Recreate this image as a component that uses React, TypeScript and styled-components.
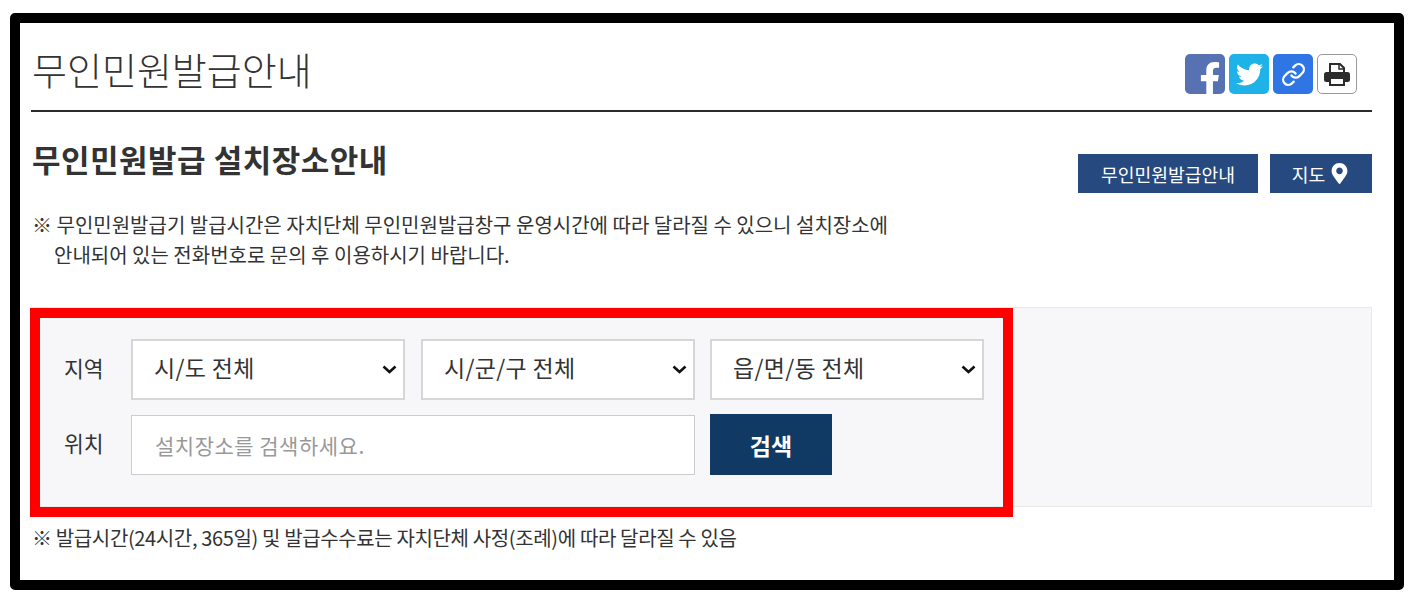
import React from "react";
import styled, { createGlobalStyle } from "styled-components";
import { FaTwitter, FaFacebookF, FaMapMarkerAlt } from "react-icons/fa";
import { Link as LinkIcon } from "lucide-react";

const Global = createGlobalStyle`
  html, body { margin: 0; padding: 0; background: #fff; }
  body { font-family: "Noto Sans CJK KR", "Noto Sans", sans-serif; color: #333; width: 1415px; height: 602px; overflow: hidden; }
  * { box-sizing: border-box; }
`;

const Frame = styled.div`
  width: 1394px; height: 577px; margin: 13px 0 0 10px;
  border: 10px solid #000; border-radius: 5px; background: #fff;
  padding: 0 22px 0 11px;
`;
const TitleBar = styled.header`
  height: 89px; display: flex; justify-content: space-between; align-items: flex-start;
  border-bottom: 2px solid #2b2b2b;
`;
const Title = styled.h1`
  margin: 21px 0 0 1px; font-size: 38px; line-height: 50px; font-weight: 300; color: #333; white-space: nowrap;
`;
const Share = styled.div`
  display: flex; gap: 4px; margin: 31px 15px 0 0;
`;
const ShareIcon = styled.a<{ $bg: string; $border?: string; $fg?: string }>`
  width: 40px; height: 40px; border-radius: 5px; display: flex; align-items: center; justify-content: center;
  overflow: hidden;
  background: ${p => p.$bg}; color: ${p => p.$fg ?? "#fff"};
  border: ${p => p.$border ? `1px solid ${p.$border}` : "none"};
`;
const HeadRow = styled.div`
  display: flex; justify-content: space-between; align-items: flex-start; height: 195px;
`;
const HeadText = styled.div`
  padding: 26px 0 0 1px;
`;
const SubTitle = styled.h2`
  margin: 0; font-size: 31px; line-height: 42px; font-weight: 700; color: #333; white-space: nowrap; letter-spacing: 0.5px;
`;
const Note = styled.p<{ $indent?: boolean }>`
  margin: 0; font-size: 20px; line-height: 30px; color: #333; white-space: nowrap;
  padding-left: ${p => (p.$indent ? "22px" : "0")};
`;
const Notes = styled.div`
  margin-top: 30px;
`;
const Actions = styled.div`
  display: flex; gap: 12px; padding-top: 42px;
`;
const ActionBtn = styled.a<{ $w: number }>`
  width: ${p => p.$w}px; height: 39px; background: #264a80; color: #fff; font-size: 18.2px;
  display: flex; align-items: center; justify-content: center; gap: 4px;
`;
const Panel = styled.section`
  position: relative; height: 200px; background: #f7f7f9; border: 1px solid #e9e9e9;
  padding: 31px 0 0 32px; display: flex; flex-direction: column; gap: 14px;
`;
const RedBox = styled.div`
  position: absolute; left: -2px; top: 0; width: 983px; height: 209px; border: 10px solid #f00; pointer-events: none;
`;
const Row = styled.div`
  display: flex; align-items: center; gap: 15px;
`;
const Label = styled.label`
  width: 52px; font-size: 21.5px; color: #333; line-height: 60px; margin-top: -4px; white-space: nowrap;
`;
const chevron = `url("data:image/svg+xml,%3Csvg xmlns='http://www.w3.org/2000/svg' width='15' height='9'%3E%3Cpath d='M1.5 1.5 7.5 7 13.5 1.5' fill='none' stroke='%23111' stroke-width='2.6'/%3E%3C/svg%3E")`;
const Select = styled.select<{ $nudge?: boolean }>`
  appearance: none;
  width: 274px; height: 61px; padding: 0 0 5px 21px; margin-left: ${p => (p.$nudge ? "1px" : "0")};
  font: 400 23px "Noto Sans CJK KR", sans-serif; letter-spacing: 0.3px; color: #333;
  background: #fff ${chevron} no-repeat right 6px center; border: 2px solid #d6d6d6; border-radius: 0; outline: none;
`;
const Search = styled.input`
  width: 564px; height: 60px; padding-left: 23px; font: 400 21px "Noto Sans CJK KR", sans-serif;
  background: #fff; border: 1px solid #ccc; outline: none; letter-spacing: 0.5px;
  &::placeholder { color: #999; opacity: 1; }
`;
const SearchBtn = styled.button`
  width: 122px; height: 61px; background: #103a63; color: #fff; border: none; font: 700 23px "Noto Sans CJK KR", sans-serif;
`;
const Foot = styled.p`
  margin: 16px 0 0 1px; font-size: 20px; line-height: 29px; color: #333; letter-spacing: -0.36px; white-space: nowrap;
`;

const PrinterGlyph = () => (
  <svg width="26" height="23" viewBox="0 0 26 23" aria-hidden="true">
    <path d="M6 1h10l4 4v6H6z" fill="#fff" stroke="#2c2c2c" strokeWidth="2" />
    <path d="M15 1v5h5" fill="none" stroke="#2c2c2c" strokeWidth="1.5" />
    <rect x="0" y="9" width="26" height="10" rx="2.5" fill="#2c2c2c" />
    <path d="M6 15h14v7H6z" fill="#fff" stroke="#2c2c2c" strokeWidth="2" />
  </svg>
);

export default function App() {
  return (
    <>
      <Global />
      <Frame>
        <TitleBar>
          <Title>무인민원발급안내</Title>
          <Share>
            <ShareIcon $bg="#5672b2"><FaFacebookF size={34} style={{ margin: "10px 0 0 10px" }} /></ShareIcon>
            <ShareIcon $bg="#1eb2e8"><FaTwitter size={27} /></ShareIcon>
            <ShareIcon $bg="#2f76e4"><LinkIcon size={25} strokeWidth={2.2} /></ShareIcon>
            <ShareIcon $bg="#fff" $border="#999" $fg="#2c2c2c"><PrinterGlyph /></ShareIcon>
          </Share>
        </TitleBar>
        <HeadRow>
          <HeadText>
            <SubTitle>무인민원발급 설치장소안내</SubTitle>
            <Notes>
              <Note>※ 무인민원발급기 발급시간은 자치단체 무인민원발급창구 운영시간에 따라 달라질 수 있으니 설치장소에</Note>
              <Note $indent>안내되어 있는 전화번호로 문의 후 이용하시기 바랍니다.</Note>
            </Notes>
          </HeadText>
          <Actions>
            <ActionBtn $w={180}>무인민원발급안내</ActionBtn>
            <ActionBtn $w={102}>지도 <FaMapMarkerAlt size={21} /></ActionBtn>
          </Actions>
        </HeadRow>
        <Panel>
          <Row>
            <Label>지역</Label>
            <Select><option>시/도 전체</option></Select>
            <Select $nudge><option>시/군/구 전체</option></Select>
            <Select><option>읍/면/동 전체</option></Select>
          </Row>
          <Row>
            <Label>위치</Label>
            <Search placeholder="설치장소를 검색하세요." />
            <SearchBtn>검색</SearchBtn>
          </Row>
          <RedBox />
        </Panel>
        <Foot>※ 발급시간(24시간, 365일) 및 발급수수료는 자치단체 사정(조례)에 따라 달라질 수 있음</Foot>
      </Frame>
    </>
  );
}
